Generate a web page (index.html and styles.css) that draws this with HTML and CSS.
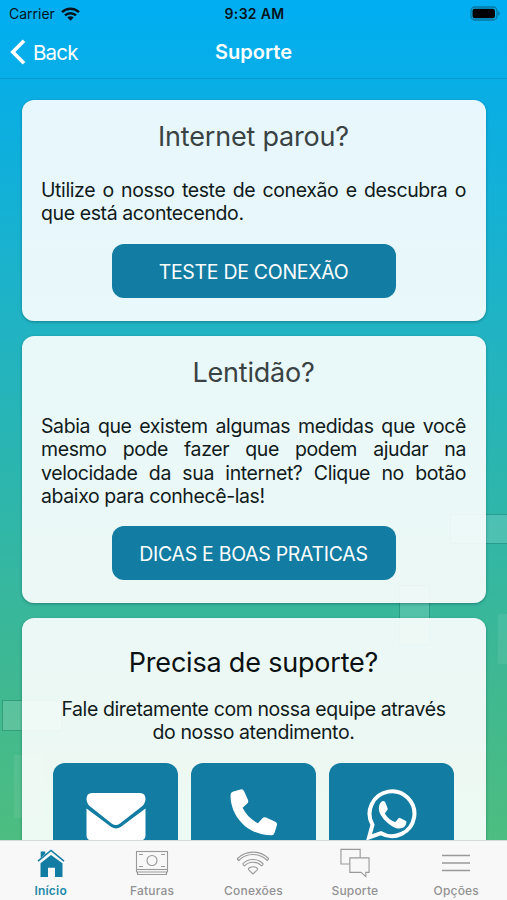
FILE: index.html
```html
<!DOCTYPE html>
<html lang="pt-BR">
<head>
  <meta charset="UTF-8">
  <meta name="viewport" content="width=device-width, initial-scale=1">
  <title>Suporte</title>
  <link rel="stylesheet" href="styles.css">
</head>
<body>

  <div class="app">
    <div class="fundo">
      <span class="bloco bloco-1"></span>
      <span class="bloco bloco-2"></span>
      <span class="bloco bloco-3"></span>
      <span class="bloco bloco-4"></span>
      <span class="bloco bloco-5"></span>
    </div>

    <header class="topo">
      <div class="status">
        <div class="operadora">
          <span>Carrier</span>
          <svg width="19" height="14" viewBox="0 0 19 14" fill="none" stroke="#03141c" stroke-width="2.5">
            <path d="M1 5.2a12.2 12.2 0 0 1 17 0M4 8.4a8 8 0 0 1 11 0"/>
            <path d="M9.500 13.800L6.300 10.600a4.600 4.600 0 0 1 6.400 0z" fill="#03141c" stroke="none"/>
          </svg>
        </div>
        <span class="hora">9:32 AM</span>
        <svg class="bateria" width="30" height="15" viewBox="0 0 30 15">
          <rect x="1" y="1" width="26" height="13" rx="4" fill="none" stroke="#08779f" stroke-width="1.300"/>
          <rect x="2.500" y="2.800" width="22.500" height="9.400" rx="2.200" fill="#000"/>
          <path d="M28.200 5v5q1.500-1 1.500-2.500T28.200 5z" fill="#08779f"/>
        </svg>
      </div>
      <nav class="barra">
        <a class="voltar">
          <svg width="16" height="26" viewBox="0 0 16 26" fill="none" stroke="#fff" stroke-width="3.600">
            <path d="M14 1.800L2.800 13 14 24.200"/>
          </svg>
          <span>Back</span>
        </a>
        <h1>Suporte</h1>
      </nav>
    </header>

    <main class="conteudo">
      <section class="card card-teste">
        <h2>Internet parou?</h2>
        <p>Utilize o nosso teste de conexão e descubra o que está acontecendo.</p>
        <button class="botao">TESTE DE CONEXÃO</button>
      </section>

      <section class="card card-dicas">
        <h2>Lentidão?</h2>
        <p>Sabia que existem algumas medidas que você mesmo pode fazer que podem ajudar na velocidade da sua internet? Clique no botão abaixo para conhecê-las!</p>
        <button class="botao">DICAS E BOAS PRATICAS</button>
      </section>

      <section class="card card-contato">
        <h2>Precisa de suporte?</h2>
        <p>Fale diretamente com nossa equipe através<br>do nosso atendimento.</p>
        <div class="contatos">
          <button class="contato">
            <svg width="60" height="48" viewBox="0 0 60 48" fill="#fff">
              <path d="M6 0h48q5.500 0 5.500 6 0 5-5 8.500L34 30.500q-4.200 3-8.400 0L5.500 14.500Q.5 11 .5 6 .5 0 6 0z"/>
              <path d="M.5 15.500L25 33.800q5 3.200 10 0L59.500 15.500V42q0 5.500-5.500 5.500H6Q.5 47.500.5 42z"/>
            </svg>
          </button>
          <button class="contato">
            <svg class="icone-fone" width="48" height="48" viewBox="0 0 48 48" fill="#fff">
              <path d="M3.300 2.600L10.500.4q2.400-.7 3.500 1.600l4 9q.9 2-.8 3.600l-4.600 4.200C15.800 25.400 21.300 31 28 34.200l4.400-4.900q1.500-1.700 3.600-.8l9.300 4.300q2.200 1 1.600 3.400l-2.200 7.400q-.7 2.700-3.500 2.700C18 46.300.5 27.800.5 6q0-2.600 2.800-3.400z"/>
            </svg>
          </button>
          <button class="contato">
            <svg class="icone-zap" width="51" height="52" viewBox="0 0 51 52" fill="none">
              <path d="M3 49.500l3.500-12.800A22.400 22.400 0 1 1 15 45.200z" stroke="#fff" stroke-width="4"/>
              <path d="M16.200 13.300q1.500-.6 2.700.5.700 1 2.700 6.500.4 1.100-.4 2l-1.800 2.300q-.6.700 0 1.600 3.200 5.300 9 7.600.9.300 1.500-.4l2.400-3q.7-.8 1.700-.4l5.600 2.700q1 .5.8 1.700-.7 5.700-7 6.100-5.100.3-12.600-6.300-7.700-7-8-13.500 0-5 3.400-7.400z" fill="#fff"/>
            </svg>
          </button>
        </div>
      </section>
    </main>

    <footer class="abas">
      <a class="aba ativa">
        <svg width="30" height="30" viewBox="0 0 30 30">
          <path d="M4.500 15.200L15 7l11.500 8.200V29H19v-9.300h-7V29H4.500z" fill="#127ca2"/>
          <path d="M2 13.200L15 2.500l13 10.700" fill="none" stroke="#127ca2" stroke-width="1.500"/>
          <path d="M4.700 3.500h4.500V6l-4.500 3.800z" fill="#127ca2"/>
        </svg>
        <span>Início</span>
      </a>
      <a class="aba">
        <svg width="34" height="30" viewBox="0 0 34 30" fill="none" stroke="#999" stroke-width="1.100">
          <rect x="1.500" y="3.500" width="31" height="18"/>
          <circle cx="17" cy="12.500" r="5"/>
          <path d="M4 6.500h4M26 6.500h4M4 18.500h4M26 18.500h4M1.500 21.500V24h31v-2.500M2.500 24v2.500h29V24"/>
        </svg>
        <span>Faturas</span>
      </a>
      <a class="aba">
        <svg width="34" height="30" viewBox="0 0 34 30" fill="none" stroke="#999" stroke-width="1.100" stroke-linejoin="round">
          <path d="M1.500 10.500a22 22 0 0 1 31 0q.3 1-1.200 2a20 20 0 0 0-28.600 0q-1.500-.8-1.200-2z"/>
          <path d="M7 15.700a14 14 0 0 1 20 0q.3 1-1.400 2.200a12 12 0 0 0-17.200 0Q6.700 17 7 15.700z"/>
          <path d="M12.500 20.500a6.500 6.500 0 0 1 9 0q.4.800-.7 1.800L17 26l-3.800-3.700q-1.100-1-.7-1.800z"/>
        </svg>
        <span>Conexões</span>
      </a>
      <a class="aba">
        <svg width="34" height="32" viewBox="0 0 34 32" fill="none" stroke="#999" stroke-width="1.200">
          <path d="M11.500 17H2V1.500h20.500V10"/>
          <path d="M11.500 10.500H32V26h-3.500v4.500L23.500 26h-12z"/>
        </svg>
        <span>Suporte</span>
      </a>
      <a class="aba">
        <svg width="30" height="30" viewBox="0 0 30 30" fill="none" stroke="#999" stroke-width="1.400">
          <path d="M1 7.500h28M1 15h28M1 22.500h28"/>
        </svg>
        <span>Opções</span>
      </a>
    </footer>
  </div>

</body>
</html>
```

FILE: styles.css
```css
* {
  box-sizing: border-box;
}
body {
  margin: 0;
  font-family: Inter, "Liberation Sans", sans-serif;
  color: #111b1c;
}
.app {
  position: relative;
  display: flex;
  flex-direction: column;
  height: 900px;
  overflow: hidden;
  background: linear-gradient(#00aef2 0, #09aee5 90px, #20b3c4 320px, #2eb6ab 500px, #3eb893 670px, #4dbd80 840px);
}
.fundo {
  position: absolute;
  inset: 0;
}
.bloco {
  position: absolute;
  background: rgba(255,255,255,0.14);
  border: 1px solid rgba(0,70,60,0.22);
  background-clip: padding-box;
}
.bloco-1 {
  left: 450px;
  top: 514px;
  width: 70px;
  height: 30px;
}
.bloco-2 {
  left: 399px;
  top: 585px;
  width: 31px;
  height: 60px;
}
.bloco-3 {
  left: 2px;
  top: 700px;
  width: 60px;
  height: 31px;
}
.bloco-4 {
  left: 498px;
  top: 614px;
  width: 30px;
  height: 50px;
  border: none;
  background: rgba(255,255,255,0.08);
}
.bloco-5 {
  left: 14px;
  top: 755px;
  width: 30px;
  height: 63px;
  border: none;
  background: rgba(255,255,255,0.07);
}

/* Barra superior */
.topo {
  position: relative;
  height: 79px;
  border-bottom: 1px solid rgba(0,90,130,0.28);
}
.status {
  display: grid;
  grid-template-columns: 1fr auto 1fr;
  align-items: center;
  height: 27px;
  padding: 0 7px 0 9px;
  font-size: 14px;
  color: #03141c;
}
.operadora {
  display: flex;
  align-items: center;
  gap: 6px;
}
.hora {
  font-weight: 600;
  letter-spacing: 0.3px;
}
.bateria {
  justify-self: end;
}
.barra {
  display: grid;
  grid-template-columns: 1fr auto 1fr;
  align-items: center;
  height: 50px;
  padding: 0 10px;
  color: #fff;
}
.voltar {
  display: flex;
  align-items: center;
  gap: 7px;
  font-size: 20.5px;
  letter-spacing: -0.8px;
}
.barra h1 {
  margin: 0;
  font-size: 20px;
  font-weight: 600;
}

/* Cards */
.conteudo {
  position: relative;
  flex: 1;
  min-height: 0;
  overflow: hidden;
  display: flex;
  flex-direction: column;
  gap: 15px;
  padding: 21px 21px 0 22px;
}
.card {
  flex: none;
  padding: 20px 20px 22px 19px;
  border-radius: 12px;
  background: rgba(255,255,255,0.9);
  box-shadow: 0 1px 3px rgba(0,50,60,0.4);
  text-align: center;
}
.card h2 {
  margin: 0;
  font-size: 27px;
  line-height: 33px;
  font-weight: 400;
  letter-spacing: -0.2px;
  color: #3a4344;
}
.card p {
  margin: 26px 0 18px;
  font-size: 19.5px;
  line-height: 23.300px;
  letter-spacing: -0.4px;
  text-align: justify;
}
.botao {
  display: block;
  width: 284px;
  height: 54px;
  margin: 0 auto;
  padding: 2px 0 0;
  border: none;
  border-radius: 12px;
  background: #127ca2;
  color: #fff;
  font-family: inherit;
  font-size: 19.5px;
  letter-spacing: -0.3px;
}
.card-teste {
  height: 221px;
}
.card-dicas {
  height: 267px;
}
.card-contato {
  height: 320px;
  padding-top: 28px;
}
.card-contato h2 {
  color: #0b1112;
}
.card-contato p {
  margin-top: 19px;
  text-align: center;
}
.contatos {
  display: flex;
  justify-content: center;
  gap: 13px;
}
.contato {
  display: flex;
  justify-content: center;
  align-items: flex-start;
  width: 125px;
  height: 125px;
  padding: 30px 0 0;
  border: none;
  border-radius: 12px;
  background: #127ca2;
}
.icone-fone {
  margin-top: -4px;
}
.icone-zap {
  margin-top: -5px;
}

/* Abas inferiores */
.abas {
  position: relative;
  display: grid;
  grid-template-columns: repeat(5, 1fr);
  height: 60px;
  border-top: 1px solid #d5dcd9;
  background: #f8f8f8;
}
.aba {
  display: flex;
  flex-direction: column;
  align-items: center;
  justify-content: space-between;
  padding: 7px 0 2px;
  font-size: 12px;
  font-weight: 500;
  letter-spacing: 0.2px;
  color: #929292;
}
.aba svg {
  height: 30px;
}
.aba.ativa {
  color: #2488ab;
  font-weight: 600;
}
```
